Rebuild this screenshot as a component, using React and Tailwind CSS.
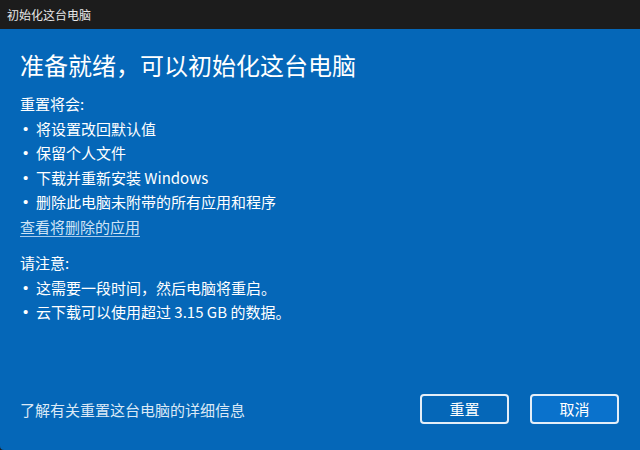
import React from "react";

const font = { fontFamily: '"Noto Sans CJK SC", "Noto Sans", sans-serif' };

const resetItems = [
  "将设置改回默认值",
  "保留个人文件",
  "下载并重新安装 Windows",
  "删除此电脑未附带的所有应用和程序",
];

const noteItems = [
  "这需要一段时间，然后电脑将重启。",
  "云下载可以使用超过 3.15 GB 的数据。",
];

const Bullet = ({ children }) => (
  <li className="flex h-[24.5px] items-center">
    <span className="w-[16px] pl-[3px] font-['Liberation_Sans'] text-[15px]">•</span>
    <span>{children}</span>
  </li>
);

export default function App() {
  return (
    <div
      className="flex h-[450px] w-[640px] flex-col overflow-hidden bg-[#1c1c1c] text-white"
      style={font}
    >
      <div className="flex h-[29px] shrink-0 items-center px-[7px] text-[12px] text-[#e8e8e8]">
        初始化这台电脑
      </div>

      <div className="flex flex-1 flex-col rounded-bl-[4px] bg-[#0567b8] px-[20px]">
        <h1 className="mt-[20px] h-[32px] text-[24px] leading-[32px] font-normal">
          准备就绪，可以初始化这台电脑
        </h1>

        <div className="mt-[11px] text-[15px]">
          <div className="flex h-[24.5px] items-center">重置将会:</div>
          <ul>
            {resetItems.map((t) => (
              <Bullet key={t}>{t}</Bullet>
            ))}
          </ul>
          <div className="flex h-[24.5px] items-center">
            <a className="text-[#cfe3f5] underline decoration-[#a9cbeb] underline-offset-[3px]">
              查看将删除的应用
            </a>
          </div>
        </div>

        <div className="mt-[12px] text-[15px]">
          <div className="flex h-[24.5px] items-center">请注意:</div>
          <ul>
            {noteItems.map((t) => (
              <Bullet key={t}>{t}</Bullet>
            ))}
          </ul>
        </div>

        <div className="mt-auto flex items-center justify-between pb-[26px] pr-[1px]">
          <a className="mt-[3px] text-[15px] text-[#dbe9f6]">了解有关重置这台电脑的详细信息</a>
          <div className="flex gap-[21px]">
            <button className="flex h-[30px] w-[89px] items-center justify-center rounded-[4px] border-2 border-[#e4eef8] text-[15px]">
              重置
            </button>
            <button className="flex h-[30px] w-[89px] items-center justify-center rounded-[4px] border-2 border-[#e4eef8] bg-[#0a72cc] text-[15px]">
              取消
            </button>
          </div>
        </div>
      </div>
    </div>
  );
}
